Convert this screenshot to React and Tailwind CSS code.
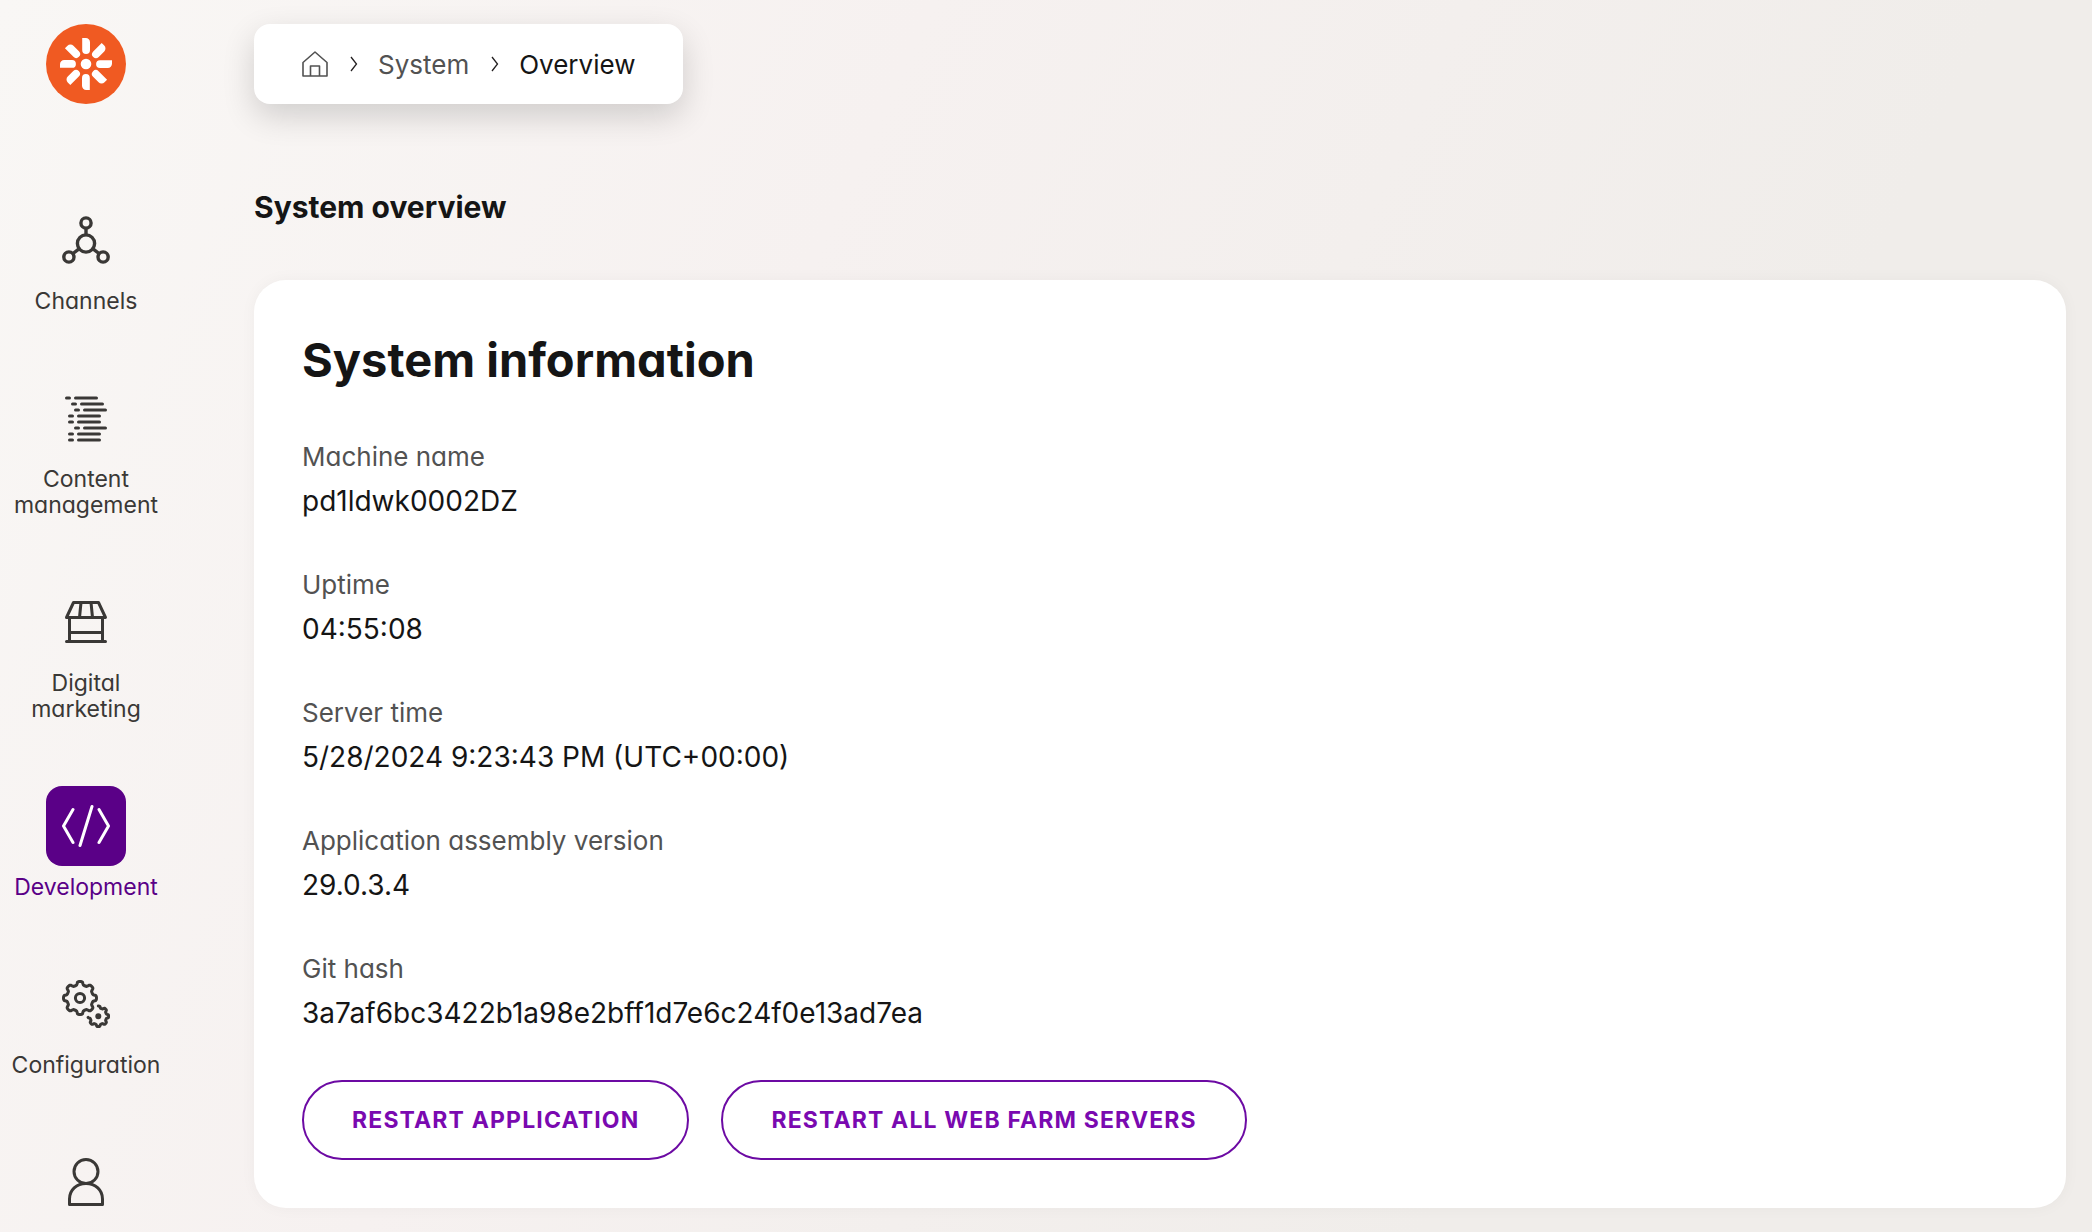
import React from "react";

const details = [
  { label: "Machine name", value: "pd1ldwk0002DZ" },
  { label: "Uptime", value: "04:55:08" },
  { label: "Server time", value: "5/28/2024 9:23:43 PM (UTC+00:00)" },
  { label: "Application assembly version", value: "29.0.3.4" },
  { label: "Git hash", value: "3a7af6bc3422b1a98e2bff1d7e6c24f0e13ad7ea" },
];

// Outline of a cog with rounded teeth, sampled between two angles (degrees)
const cogPath = (cx, cy, radius, depth, from, to) => {
  const points = [];
  for (let a = from; a <= to; a += 3) {
    const t = (a * Math.PI) / 180;
    const r = radius + depth * Math.tanh(2.5 * Math.cos(8 * t));
    points.push(`${(cx + r * Math.cos(t)).toFixed(2)} ${(cy + r * Math.sin(t)).toFixed(2)}`);
  }
  return `M${points.join("L")}`;
};

const Icon = ({ children, width = 3 }) => (
  <svg
    viewBox="0 0 48 48"
    className="size-12"
    fill="none"
    stroke="currentColor"
    strokeWidth={width}
    strokeLinecap="round"
    strokeLinejoin="round"
    aria-hidden="true"
  >
    {children}
  </svg>
);

const ChannelsIcon = () => (
  <Icon width={3.4}>
    <circle cx="24" cy="7" r="5.1" />
    <circle cx="24" cy="27.5" r="8.6" />
    <circle cx="6.9" cy="41" r="5.1" />
    <circle cx="41.1" cy="41" r="5.1" />
    <path d="M24 12.500v6M17 32.800l-6 4.700M31 32.800l6 4.700" />
  </Icon>
);

const ContentIcon = () => (
  <Icon>
    <path d="M4.500 4h3M13.500 4h21M10.500 10h3M19.500 10h21M13.500 16h3M22.500 16h21M7.500 22h3M16.500 22h21M7.500 28h3M16.500 28h21M13.500 34h3M22.500 34h21M7.500 40h3M16.500 40h21M7.500 46h3M16.500 46h21" />
  </Icon>
);

const MarketingIcon = () => (
  <Icon>
    <path d="M11.500 4.500h25L43.500 19.500h-39zM19 4.500l-1.500 15M29 4.500l1.500 15M7.500 19.500v24M40.500 19.500v24M7.500 34.500h33M4.500 43.500h39" />
  </Icon>
);

const DevelopmentIcon = () => (
  <Icon>
    <path d="M11 7.500 1.500 24 11 40.500M37 7.500 46.500 24 37 40.500M30 4.500l-12 39" />
  </Icon>
);

const ConfigurationIcon = () => (
  <Icon>
    <path d={`${cogPath(18, 18, 14.8, 1.7, 0, 357)}Z`} />
    <circle cx="18" cy="18" r="4.600" />
    <path d={cogPath(36.3, 36.3, 9.3, 1, -90, 174)} />
    <circle cx="36.300" cy="36.300" r="1.500" />
  </Icon>
);

const UserIcon = () => (
  <Icon>
    <circle cx="24" cy="13.500" r="12" />
    <path d="M7.500 46.500v-5.500C7.500 32 14.500 25.500 24 25.500S40.500 32 40.500 41v5.500z" />
  </Icon>
);

const HomeIcon = () => (
  <svg viewBox="0 0 26 26" className="size-[26px]" fill="none" stroke="currentColor" strokeWidth="1.600" strokeLinejoin="round">
    <path d="M1 25V11.500L13 1l12 10.500V25zM8.500 25V15h9v10" />
  </svg>
);

const Chevron = () => (
  <svg viewBox="0 0 8 16" className="h-4 w-2 text-[#231f20]" fill="none" stroke="currentColor" strokeWidth="1.300" aria-hidden="true">
    <path d="M1 1 6.500 8 1 15" />
  </svg>
);

const Logo = () => (
  <svg viewBox="0 0 80 80" className="size-20" aria-hidden="true">
    <circle cx="40" cy="40" r="40" fill="#f05a22" />
    <g fill="#fff">
      <circle cx="40" cy="40" r="5.300" />
      {[0, 45, 90, 135, 180, 225, 270, 315].map((angle) => (
        <path
          key={angle}
          d="M36.200 14h3.600a4.200 4.200 0 0 1 4.200 4.200v7.800a3.900 3.900 0 0 1-7.800 0z"
          transform={`rotate(${angle} 40 40)`}
        />
      ))}
    </g>
  </svg>
);

const navItems = [
  { label: "Channels", icon: ChannelsIcon },
  { label: "Content management", icon: ContentIcon },
  { label: "Digital marketing", icon: MarketingIcon },
  { label: "Development", icon: DevelopmentIcon, active: true },
  { label: "Configuration", icon: ConfigurationIcon },
];

const NavItem = ({ item }) => {
  const ItemIcon = item.icon;
  return (
    <a
      href="#"
      aria-current={item.active ? "page" : undefined}
      className={`flex flex-col items-center gap-2 pb-16 ${item.active ? "text-[#5a0087]" : "text-[#3a3836]"}`}
    >
      <span
        className={`flex size-20 items-center justify-center rounded-2xl ${item.active ? "bg-[#5a0087] text-white" : ""}`}
      >
        <ItemIcon />
      </span>
      <span className="text-center text-[23px] leading-[26px]">{item.label}</span>
    </a>
  );
};

const ActionButton = ({ children }) => (
  <button
    type="button"
    className="h-20 rounded-full border-2 border-[#6c0aa3] px-12 text-[23px] font-bold tracking-wider text-[#7a09b0] uppercase"
  >
    {children}
  </button>
);

const App = () => {
  return (
    <div className="flex h-screen overflow-hidden bg-linear-[115deg] from-[#f9f7f5] via-[#f6f1f0] via-35% to-[#f0edea] to-75% font-['Inter','Liberation_Sans',sans-serif] text-[#151515] [font-feature-settings:'cv11']">
      <aside className="flex w-43 shrink-0 flex-col items-center pt-6">
        <a href="#" aria-label="Dashboard">
          <Logo />
        </a>
        <nav className="mt-24 flex flex-col">
          {navItems.map((item) => (
            <NavItem key={item.label} item={item} />
          ))}
          <a href="#" aria-label="User" className="flex size-20 items-center justify-center self-center text-[#3a3836]">
            <UserIcon />
          </a>
        </nav>
      </aside>

      <main className="min-w-0 flex-1 pt-6 pr-[26px] pl-[82px]">
        <nav
          aria-label="Breadcrumb"
          className="flex h-20 w-fit items-center rounded-2xl bg-white px-12 text-[26px] shadow-[0_12px_32px_rgba(0,0,0,0.16)]"
        >
          <a href="#" aria-label="Home" className="mr-[22px] text-[#525252]">
            <HomeIcon />
          </a>
          <Chevron />
          <a href="#" className="mr-[22px] ml-5 text-[#525252]">
            System
          </a>
          <Chevron />
          <span className="ml-5" aria-current="page">
            Overview
          </span>
        </nav>

        <h1 className="mt-[83px] text-[30px] leading-10 font-bold">System overview</h1>

        <section className="mt-[53px] rounded-4xl bg-white p-12 shadow-[0_0_16px_rgba(0,0,0,0.04)]">
          <h2 className="text-[47px] leading-16 font-bold">System information</h2>
          <dl className="mt-[42px] flex flex-col gap-10">
            {details.map(({ label, value }) => (
              <div key={label}>
                <dt className="text-[26px] leading-[46px] text-[#525252]">{label}</dt>
                <dd className="text-[28px] leading-[42px] [font-feature-settings:normal]">{value}</dd>
              </div>
            ))}
          </dl>
          <div className="mt-[46px] flex gap-8">
            <ActionButton>Restart application</ActionButton>
            <ActionButton>Restart all web farm servers</ActionButton>
          </div>
        </section>
      </main>
    </div>
  );
};

export default App;
